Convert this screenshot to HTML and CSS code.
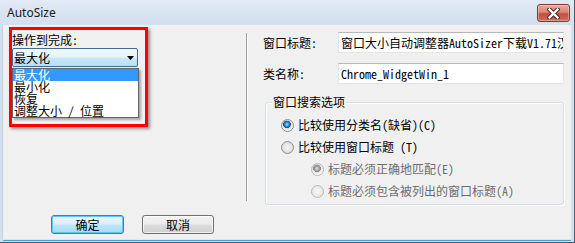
FILE: index.html
```html
<!DOCTYPE html>
<html lang="zh-CN">
<head>
<meta charset="utf-8">
<title>AutoSize</title>
<link rel="stylesheet" href="styles.css">
</head>
<body>
<div class="window">
  <div class="titlebar">
    <span class="title">AutoSize</span>
    <div class="close">
      <svg width="13" height="11" viewBox="0 0 13 11">
        <path d="M2.5 1.5 L10.5 9.5 M10.5 1.5 L2.5 9.5" stroke="#4a2320" stroke-width="4.4" stroke-linecap="square" fill="none"/>
        <path d="M2.5 1.5 L10.5 9.5 M10.5 1.5 L2.5 9.5" stroke="#ffffff" stroke-width="2.4" stroke-linecap="square" fill="none"/>
      </svg>
    </div>
  </div>
  <div class="client">
    <div class="left">
      <div class="annot">
        <div class="lbl">操作到完成:</div>
        <div class="combo">
          <span>最大化</span>
          <svg class="arrow" width="7" height="4" viewBox="0 0 7 4"><path d="M0 0 H7 L3.5 4 Z" fill="#000"/></svg>
        </div>
        <ul class="list">
          <li class="sel">最大化</li>
          <li>最小化</li>
          <li>恢复</li>
          <li>调整大小 / 位置</li>
        </ul>
      </div>
      <div class="buttons">
        <div class="btn default">确定</div>
        <div class="btn">取消</div>
      </div>
    </div>
    <div class="sep"></div>
    <div class="right">
      <div class="row">
        <div class="rlabel">窗口标题:</div>
        <div class="edit">窗口大小自动调整器AutoSizer下载V1.71汉化版</div>
      </div>
      <div class="row">
        <div class="rlabel">类名称:</div>
        <div class="edit">Chrome_WidgetWin_1</div>
      </div>
      <div class="group">
        <div class="legend">窗口搜索选项</div>
        <div class="radios">
          <div class="radio"><span class="rb on"></span>比较使用分类名(缺省)(C)</div>
          <div class="radio"><span class="rb"></span>比较使用窗口标题 (T)</div>
          <div class="radio sub disabled"><span class="rb on"></span>标题必须正确地匹配(E)</div>
          <div class="radio sub disabled"><span class="rb"></span>标题必须包含被列出的窗口标题(A)</div>
        </div>
      </div>
    </div>
  </div>
</div>
</body>
</html>
```
FILE: styles.css
```css
html, body {
  margin: 0;
  padding: 0;
  background: #ffffff;
}

.window {
  width: 575px;
  height: 243px;
  box-sizing: border-box;
  display: flex;
  flex-direction: column;
  background: #d2e0ef;
  border-right: 1px solid #4b5b6c;
  border-bottom: 1px solid #4b5b6c;
  font-family: "Noto Sans Mono CJK SC", "Noto Sans CJK SC", sans-serif;
  font-size: 12px;
  line-height: 12px;
  color: #000;
}

.titlebar {
  height: 25px;
  flex: none;
  display: flex;
  align-items: flex-start;
  justify-content: space-between;
  background: linear-gradient(#e1eaf5, #d2dfee);
}

.title {
  font-family: "Noto Sans", sans-serif;
  font-size: 12px;
  line-height: 16px;
  margin: 5px 0 0 7px;
  color: #1b1b1b;
}

.close {
  margin: 4px 4px 0 0;
  width: 33px;
  height: 18px;
  box-sizing: border-box;
  border: 1px solid #7c3b35;
  border-radius: 3px;
  background: linear-gradient(#e9aba2 0%, #d98576 45%, #c4503f 55%, #cf6a58 100%);
  box-shadow: inset 0 0 0 1px rgba(255, 210, 200, 0.45);
  display: flex;
  align-items: center;
  justify-content: center;
}

.client {
  flex: 1;
  margin: 0 3px 3px 3px;
  background: #f0f0f0;
  display: flex;
  box-shadow: -1px 0 0 #c4d3e3, 0 1px 0 #dbe6f1, 0 2px 0 #43a1da;
}

/* left column */
.left {
  width: 243px;
  flex: none;
  display: flex;
  flex-direction: column;
}

.annot {
  margin: 2px 0 0 6px;
  width: 139px;
  height: 100px;
  box-sizing: border-box;
  border: 3px solid #ff0000;
  box-shadow: 2px 2px 3px rgba(0, 0, 0, 0.4);
  padding-top: 3px;
}

.lbl {
  line-height: 14px;
  height: 14px;
}

.combo {
  margin-top: 1px;
  width: 126px;
  height: 19px;
  box-sizing: border-box;
  border: 1px solid #3d6f96;
  border-radius: 2px;
  background: linear-gradient(#f1f8fd 0%, #e4f3fc 45%, #c8e7f9 55%, #b6def5 100%);
  display: flex;
  align-items: center;
  justify-content: space-between;
  padding: 0 3px 0 1px;
}

.arrow {
  display: block;
}

.list {
  list-style: none;
  margin: 1px 0 0 0;
  padding: 0;
  width: 127px;
  box-sizing: border-box;
  border: 1px solid #646464;
  background: #fff;
  box-shadow: 2px 2px 2px rgba(0, 0, 0, 0.3);
}

.list li {
  height: 12px;
  line-height: 12px;
  padding-left: 1px;
  white-space: pre;
}

.list li.sel {
  background: #3399ff;
  color: #fff;
}

.buttons {
  margin-top: auto;
  padding: 0 0 5px 48px;
  display: flex;
  gap: 18px;
}

.btn {
  width: 73px;
  height: 19px;
  box-sizing: border-box;
  border: 1px solid #707070;
  border-radius: 3px;
  background: linear-gradient(#f2f2f2 0%, #ebebeb 48%, #dddddd 52%, #cfcfcf 100%);
  box-shadow: inset 0 0 0 1px rgba(255, 255, 255, 0.7);
  display: flex;
  align-items: center;
  justify-content: center;
  line-height: 12px;
}

.btn + .btn {
  width: 72px;
}

.btn.default {
  border-color: #3c7fb1;
  background: linear-gradient(#eaf6fd 0%, #d9f0fc 48%, #bee6fd 52%, #a7d9f5 100%);
  box-shadow: inset 0 0 0 1px #5fc8f0;
}

/* separator */
.sep {
  width: 0;
  flex: none;
  border-left: 1px solid #a0a0a0;
  border-right: 1px solid #ffffff;
  margin-top: 8px;
  height: 168px;
}

/* right column */
.right {
  flex: 1;
  padding: 7px 6px 0 15px;
}

.row {
  display: flex;
  align-items: center;
  height: 21px;
}

.row + .row {
  margin-top: 10px;
}

.rlabel {
  width: 75px;
  flex: none;
}

.edit {
  width: 226px;
  height: 21px;
  box-sizing: border-box;
  border: 1px solid #e2e5ea;
  border-top-color: #b5b8bd;
  background: #fff;
  padding-left: 2px;
  line-height: 19px;
  overflow: hidden;
  white-space: nowrap;
}

.group {
  margin: 18px 0 0 2px;
  width: 299px;
  box-sizing: border-box;
  border: 1px solid #d5dfe5;
  border-radius: 3px;
  box-shadow: inset 1px 1px 0 #ffffff, 1px 1px 0 #ffffff;
  padding-bottom: 2px;
}

.legend {
  margin: -7px 0 0 6px;
  padding: 0 1px;
  width: fit-content;
  background: #f0f0f0;
  line-height: 12px;
  height: 12px;
}

.radios {
  margin-top: 6px;
}

.radio {
  display: flex;
  align-items: center;
  height: 22px;
  padding-left: 15px;
  white-space: pre;
}

.radio.sub {
  padding-left: 45px;
}

.radio.disabled {
  color: #6d6d6d;
}

.rb {
  width: 13px;
  height: 13px;
  flex: none;
  box-sizing: border-box;
  margin-right: 4px;
  border-radius: 50%;
  border: 1px solid #8f8f8f;
  background: radial-gradient(circle at 50% 50%, #f4f4f4 0, #e6e6e6 4px, #d8d8d8 5px, #fafafa 6px);
}

.rb.on {
  background: radial-gradient(circle at 45% 40%, #aee2ff 0, #2a8fdc 2px, #0c4f93 3.6px, #d8d8d8 4px, #e8e8e8 5px, #fafafa 6px);
}

.disabled .rb {
  border-color: #b8b8b8;
  background: radial-gradient(circle at 50% 50%, #f4f4f4 0, #ececec 4px, #e4e4e4 5px, #fafafa 6px);
}

.disabled .rb.on {
  background: radial-gradient(circle at 45% 40%, #e6e6e6 0, #a8a8a8 2px, #8a8a8a 3.6px, #dedede 4px, #ececec 5px, #fafafa 6px);
}
```
